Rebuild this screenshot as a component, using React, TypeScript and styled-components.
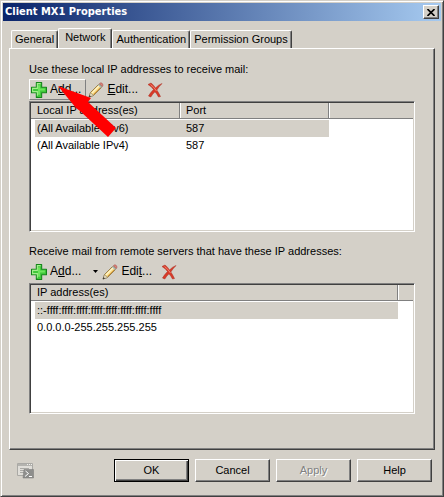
import React from 'react';
import styled, { createGlobalStyle, css } from 'styled-components';

const face = '#d4d0c8';
const shadow = '#808080';
const dark = '#404040';
const uiFont = '"Liberation Sans", Arial, sans-serif';

const GlobalStyle = createGlobalStyle`
  * { box-sizing: border-box; }
  body { margin: 0; background: ${face}; }
  button, table { font: inherit; color: inherit; }
`;

const raised = css`
  border: 1px solid;
  border-color: #fff ${dark} ${dark} #fff;
  box-shadow: inset -1px -1px ${shadow};
`;

const Dialog = styled.main`
  display: flex;
  flex-direction: column;
  min-height: 100vh;
  padding: 2px;
  border: 1px solid;
  border-color: ${face} ${dark} ${dark} ${face};
  box-shadow: inset 1px 1px #fff, inset -1px -1px ${shadow};
  background: ${face};
  color: #000;
  font: 11px/17px ${uiFont};
`;

const TitleBar = styled.header`
  display: flex;
  align-items: center;
  justify-content: space-between;
  height: 18px;
  padding: 0 2px;
  background: linear-gradient(90deg, #0a246a, #a6caf0);
`;

const Title = styled.h1`
  margin: 0;
  color: #fff;
  font: bold 11px/18px "DejaVu Sans Condensed", "DejaVu Sans", sans-serif;
  white-space: nowrap;
`;

const CloseButton = styled.button`
  ${raised}
  display: flex;
  align-items: center;
  justify-content: center;
  width: 16px;
  height: 14px;
  padding: 0;
  background: ${face};
`;

const Body = styled.div`
  display: flex;
  flex: 1;
  flex-direction: column;
  padding: 7px 6px 0;
`;

const TabList = styled.div`
  display: flex;
  align-items: flex-end;
  height: 20px;
  padding-left: 2px;
`;

const Tab = styled.button<{ $active?: boolean }>`
  height: ${p => (p.$active ? 21 : 18)}px;
  margin-bottom: ${p => (p.$active ? -1 : 0)}px;
  padding: ${p => (p.$active ? '0 6px 3px' : '0 3px')};
  border: 1px solid;
  border-color: #fff ${dark} transparent #fff;
  border-bottom: 0;
  border-radius: 2px 2px 0 0;
  box-shadow: inset -1px 0 ${shadow};
  background: ${face};
  line-height: 17px;
  white-space: nowrap;
`;

const Panel = styled.section`
  ${raised}
  display: flex;
  flex: 1;
  flex-direction: column;
  gap: 11px;
  padding: 12px 19px 35px;
`;

const Group = styled.section`
  display: flex;
  flex: 1;
  flex-direction: column;
`;

const Caption = styled.h2`
  margin: 0;
  font: inherit;
`;

const Toolbar = styled.div`
  display: flex;
  align-items: center;
  height: 21px;
  margin: 1px 0;
`;

const ToolButton = styled.button<{ $raised?: boolean }>`
  display: flex;
  align-items: center;
  gap: 3px;
  height: 21px;
  padding: 0 4px 0 1px;
  border: 1px solid transparent;
  border-color: ${p => (p.$raised ? `#fff ${shadow} ${shadow} #fff` : 'transparent')};
  background: none;
  font-size: 12px;
  white-space: nowrap;
`;

const DropButton = styled(ToolButton)`
  width: 14px;
  padding: 0 0 0 4px;
  justify-content: center;
`;

const DeleteButton = styled(ToolButton)`
  padding-left: 3px;
`;

const Mnemonic = styled.span`
  text-decoration: underline;
  text-underline-offset: 1px;
`;

const ListBox = styled.div`
  flex: 1;
  min-height: 131px;
  border: 1px solid;
  border-color: ${shadow} #fff #fff ${shadow};
  box-shadow: inset 1px 1px ${dark}, inset -1px -1px ${face};
  padding: 1px;
  background: #fff;
`;

const ListTable = styled.table`
  width: 100%;
  border-collapse: separate;
  border-spacing: 0;
  table-layout: fixed;
`;

const HeadCell = styled.th`
  height: 16px;
  padding: 0 6px;
  border-right: 1px solid ${shadow};
  border-bottom: 1px solid ${shadow};
  box-shadow: inset 1px 0 #fff;
  background: ${face};
  font-weight: normal;
  line-height: 15px;
  text-align: left;

  &:first-child { box-shadow: none; }
  &:last-child { border-right: 0; }
`;

const Row = styled.tr<{ $selected?: boolean }>`
  td { background: ${p => (p.$selected ? face : '#fff')}; }
  td:last-child { background: #fff; }
`;

const Cell = styled.td`
  height: 17px;
  padding: 0 6px;
  line-height: 17px;
  white-space: nowrap;

  &:first-child { padding-left: 2px; border-left: 4px solid #fff; }
`;

const Gap = styled.tr`
  height: 1px;
`;

const GapCell = styled.td`
  padding: 0;
`;

const Footer = styled.footer`
  display: flex;
  align-items: center;
  gap: 6px;
  padding: 9px 3px 12px 8px;
`;

const ScriptButton = styled.button`
  display: flex;
  margin-right: auto;
  padding: 0;
  border: 0;
  background: none;
`;

const PushFrame = styled.button<{ $primary?: boolean }>`
  ${raised}
  width: 75px;
  height: 23px;
  padding: 0;
  background: ${face};
  line-height: 19px;

  ${p => p.$primary && css`
    border-color: #000;
    box-shadow: inset 1px 1px #fff, inset -1px -1px ${dark}, inset -2px -2px ${shadow};
  `}

  &:disabled { color: ${shadow}; text-shadow: 1px 1px #fff; }
`;

const ArrowAnchor = styled.div`
  position: relative;
`;

const Pointer = styled.svg`
  position: absolute;
  top: 8px;
  left: 29px;
  pointer-events: none;
`;

const PlusIcon = () => (
  <svg width="16" height="16" viewBox="1 1 15 15" aria-hidden="true">
    <path d="M6 1.5h5V6h4.5v5H11v4.5H6V11H1.500V6H6z" fill="#3fc83a" stroke="#14851a" strokeLinejoin="round" />
    <path d="M7 14V10H2.500V7H7V2.500h3" fill="none" stroke="#a5ef8d" />
    <path d="M8 8h6M8.500 4v9" stroke="#6ee45d" strokeWidth="2" />
  </svg>
);

const PencilIcon = () => (
  <svg width="16" height="16" viewBox="0 0 16 16" aria-hidden="true">
    <path d="M1 15l1.500-4.500L11 2l3 3-8.500 8.500z" fill="#f7d983" stroke="#8a6c35" strokeWidth=".8" />
    <path d="M4 11l7.500-7.500" stroke="#fff4c8" strokeWidth="1.300" />
    <path d="M5.500 12.500L13 5" stroke="#d49a3e" />
    <path d="M1 15l1.500-4.500L3.500 12l1.500.5.500 1z" fill="#eee2c5" stroke="#77715f" strokeWidth=".5" />
    <path d="M.8 15.200l.8-2.200 1.400 1.400z" fill="#333" />
    <path d="M10.500 2.500l3 3" stroke="#a8b6bc" strokeWidth="1.500" />
    <path d="M11.500 1.500q1.500-1.500 2.800 0t.2 3z" fill="#df8279" stroke="#a55450" strokeWidth=".6" />
  </svg>
);

const DeleteIcon = () => (
  <svg width="16" height="16" viewBox="0 0 16 16" aria-hidden="true">
    <path d="M1 2.500L4 1q3 2.300 4.500 5Q11 3 15 1.500 12 4.500 9.800 8q2 3 3.700 6.500l-2 .5Q10 12 8 9.800 5.500 12 3.800 15L1.500 14q2-3.500 5-6.500Q4.500 4.500 1 2.500z" fill="#d83a28" stroke="#a92c20" strokeWidth=".5" />
    <path d="M3.500 2.500q3.500 2.500 6 6.500" fill="none" stroke="#f18470" />
  </svg>
);

const ScriptIcon = () => (
  <svg width="17" height="17" viewBox="0 0 17 17" aria-hidden="true">
    <path d="M.5 1.500h15v12H.5z" fill="#e0ded9" stroke="#aaa9a5" />
    <path d="M1 2h14v2H1z" fill="#b4b3af" />
    <path d="M10 2.500h1m1 0h1m1 0h1" stroke="#f2f1ee" />
    <path d="M3 6.500h9M3 8.500h5M3 10.500h4" stroke="#aaa9a5" />
    <path d="M7 7.500h9.500v8.500H6z" fill="#8e8e8c" stroke="#777" strokeWidth=".5" />
    <path d="M8.500 9l3 2.500-3.500 3M12 14.500h3" fill="none" stroke="#fff" />
  </svg>
);

const AddLabel = () => <span>A<Mnemonic>d</Mnemonic>d...</span>;

type ListProps = { label: string; widths: number[]; heads: string[]; rows: string[][] };

const AddressList = ({ label, widths, heads, rows }: ListProps) => (
  <ListBox>
    <ListTable aria-label={label}>
      <colgroup>
        {widths.map((w, i) => <col key={i} width={`${w}%`} />)}
        <col />
      </colgroup>
      <thead>
        <tr>
          {heads.map(h => <HeadCell key={h} scope="col">{h}</HeadCell>)}
          <HeadCell as="td" />
        </tr>
      </thead>
      <tbody>
        <Gap><GapCell colSpan={heads.length + 1} /></Gap>
        {rows.map((r, i) => (
          <Row key={r[0]} $selected={i === 0}>
            {r.map(c => <Cell key={c}>{c}</Cell>)}
            <Cell />
          </Row>
        ))}
      </tbody>
    </ListTable>
  </ListBox>
);

const remoteRange = '::-' + Array(8).fill('ffff').join(':');

export default function App() {
  return (
    <>
      <GlobalStyle />
      <Dialog>
        <TitleBar>
          <Title>Client MX1 Properties</Title>
          <CloseButton type="button" aria-label="Close">
            <svg width="8" height="7" viewBox="0 0 8 7" aria-hidden="true">
              <path d="M.5 0l7 7M7.500 0l-7 7" stroke="#000" strokeWidth="1.600" />
            </svg>
          </CloseButton>
        </TitleBar>
        <Body>
          <TabList role="tablist">
            <Tab type="button" role="tab">General</Tab>
            <Tab type="button" role="tab" aria-selected="true" $active>Network</Tab>
            <Tab type="button" role="tab">Authentication</Tab>
            <Tab type="button" role="tab">Permission Groups</Tab>
          </TabList>
          <Panel>
            <Group>
              <Caption>Use these local IP addresses to receive mail:</Caption>
              <ArrowAnchor>
                <Toolbar>
                  <ToolButton type="button" $raised><PlusIcon /><AddLabel /></ToolButton>
                  <ToolButton type="button"><PencilIcon /><span><Mnemonic>E</Mnemonic>dit...</span></ToolButton>
                  <DeleteButton type="button" aria-label="Remove"><DeleteIcon /></DeleteButton>
                </Toolbar>
                <Pointer width="60" height="52" viewBox="0 0 60 52" aria-hidden="true">
                  <path d="M0 0L33 12L30 16L58 42L50 51L22 25L18 22Z" fill="#f00" />
                </Pointer>
              </ArrowAnchor>
              <AddressList
                label="Local IP addresses"
                widths={[39, 39]}
                heads={['Local IP address(es)', 'Port']}
                rows={[['(All Available IPv6)', '587'], ['(All Available IPv4)', '587']]}
              />
            </Group>
            <Group>
              <Caption>Receive mail from remote servers that have these IP addresses:</Caption>
              <Toolbar>
                <ToolButton type="button"><PlusIcon /><AddLabel /></ToolButton>
                <DropButton type="button" aria-label="More add options">
                  <svg width="5" height="3" viewBox="0 0 5 3" aria-hidden="true"><path d="M0 0h5L2.500 3z" /></svg>
                </DropButton>
                <ToolButton type="button"><PencilIcon /><span>Edi<Mnemonic>t</Mnemonic>...</span></ToolButton>
                <DeleteButton type="button" aria-label="Remove"><DeleteIcon /></DeleteButton>
              </Toolbar>
              <AddressList
                label="Remote IP addresses"
                widths={[96]}
                heads={['IP address(es)']}
                rows={[[remoteRange], ['0.0.0.0-255.255.255.255']]}
              />
            </Group>
          </Panel>
          <Footer>
            <ScriptButton type="button" aria-label="View command" disabled><ScriptIcon /></ScriptButton>
            <PushFrame type="button" $primary>OK</PushFrame>
            <PushFrame type="button">Cancel</PushFrame>
            <PushFrame type="button" disabled>Apply</PushFrame>
            <PushFrame type="button">Help</PushFrame>
          </Footer>
        </Body>
      </Dialog>
    </>
  );
}
